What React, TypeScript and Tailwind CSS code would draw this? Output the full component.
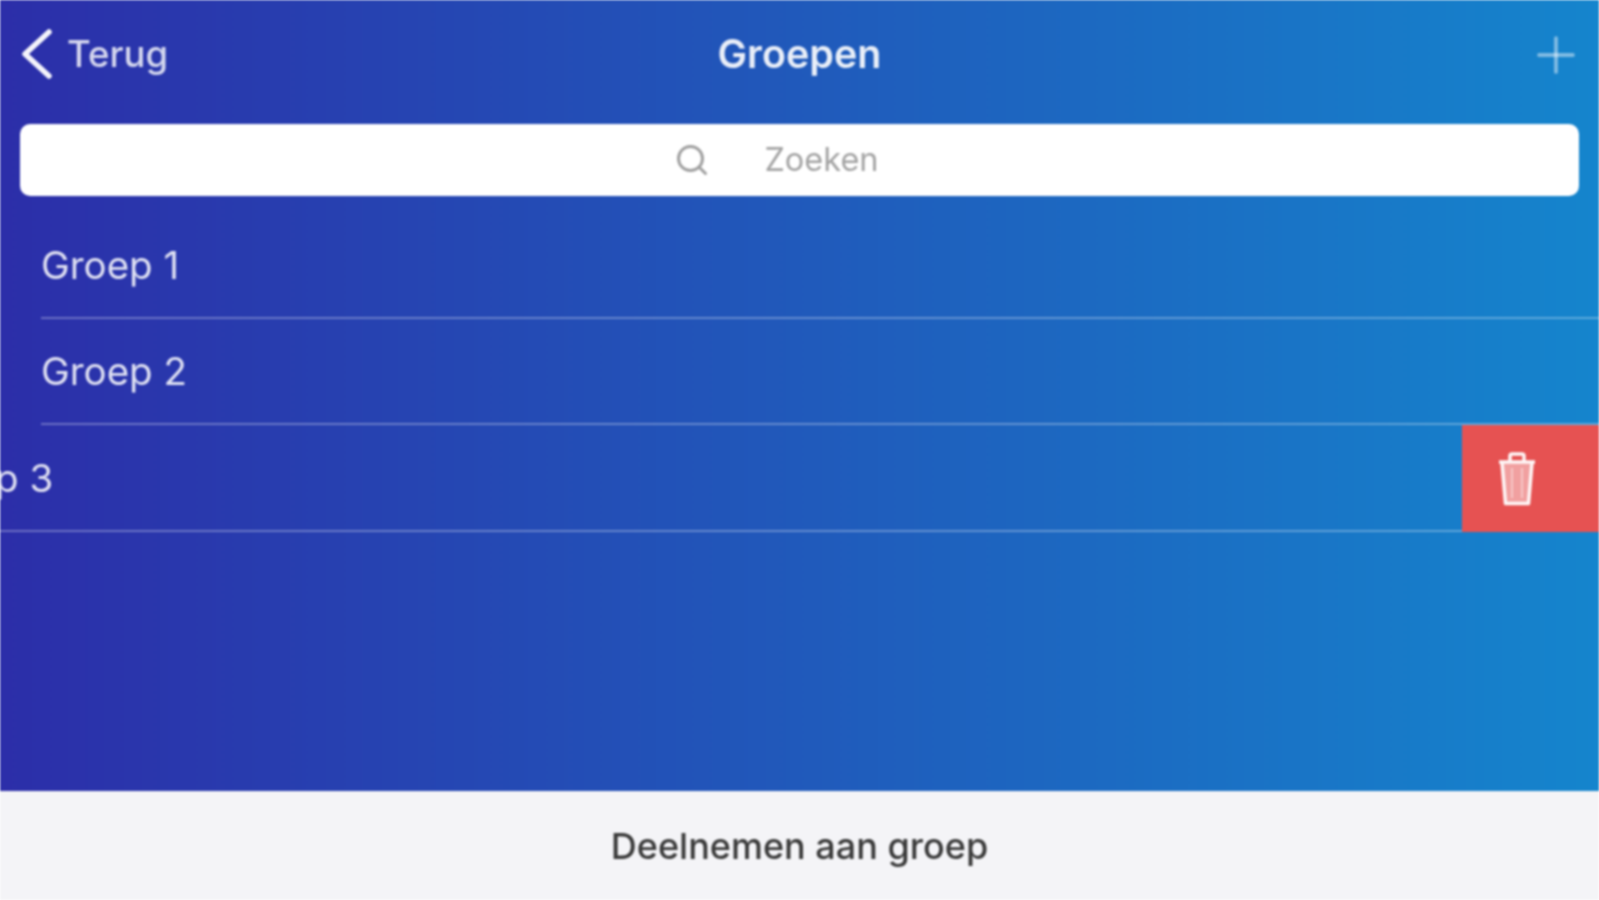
import { Plus, Search } from "lucide-react"

const font = "font-['Inter','Liberation_Sans',sans-serif]"

function GroupRow({ name }: { name: string }) {
  return (
    <div className="ml-[41px] flex h-[106px] items-center border-b-2 border-white/30 pt-[2px] text-[38.5px] text-white/85">
      {name}
    </div>
  )
}

function BackChevron() {
  return (
    <svg width="34" height="54" viewBox="0 0 34 54" fill="none" className="shrink-0 text-white/95">
      <path d="M29 4 L5 26 L29 48" stroke="currentColor" strokeWidth="5.5" strokeLinecap="round" strokeLinejoin="round" />
    </svg>
  )
}

function TrashCan() {
  return (
    <svg width="38" height="54" viewBox="0 0 38 54" fill="none" className="shrink-0 text-white">
      <path d="M5 11 L8.5 51 H29.5 L33 11 Z" fill="currentColor" fillOpacity="0.45" />
      <path d="M1 10 H37 M4 11 L7.5 51.5 H30.5 L34 11 M12 9 V4 Q12 2 14 2 H24 Q26 2 26 4 V9" stroke="currentColor" strokeWidth="3.5" strokeLinejoin="round" strokeOpacity="0.95" />
      <path d="M14 16 V46 M24 16 V46" stroke="currentColor" strokeWidth="2" strokeOpacity="0.4" />
    </svg>
  )
}

export default function App() {
  return (
    <div className={`flex h-[900px] w-[1599px] flex-col overflow-hidden blur-[1px] ${font}`}>
      <div className="flex h-[791px] flex-col bg-linear-to-r/srgb from-[#2c2ea9] to-[#1585cd]">
        <div className="flex h-[124px] shrink-0 items-center justify-between pb-[15px] pl-[20px] pr-[14px]">
          <div className="flex w-[294px] items-center gap-[13px] text-[36.5px] font-medium text-white/80">
            <BackChevron />
            <span>Terug</span>
          </div>
          <div className="text-[39.5px] font-semibold text-white/90">Groepen</div>
          <div className="flex w-[300px] justify-end">
            <Plus size={58} strokeWidth={1.6} className="text-white/45" />
          </div>
        </div>

        <div className="mx-[20px] flex h-[72px] shrink-0 items-center justify-center gap-[54px] rounded-[10px] bg-white pr-[46px] text-[32.5px] text-[#a3a3a3]">
          <Search size={36} strokeWidth={2} className="text-[#a0a0a0]" />
          <span>Zoeken</span>
        </div>

        <div className="mt-[17px] flex flex-col">
          <GroupRow name="Groep 1" />
          <GroupRow name="Groep 2" />
          <div className="flex h-[107px] items-stretch">
            <div className="flex min-w-0 flex-1 items-center overflow-hidden border-b-2 border-white/30 pt-[2px]">
              <span className="-ml-[93px] whitespace-nowrap text-[38.5px] text-white/85">Groep 3</span>
            </div>
            <div className="flex w-[137px] shrink-0 items-center bg-[#e65252] pl-[36px]">
              <TrashCan />
            </div>
          </div>
        </div>
      </div>
      <div className="flex flex-1 items-center justify-center bg-[#f4f4f7] text-[36px] font-medium text-[#3a3a3a]">
        Deelnemen aan groep
      </div>
    </div>
  )
}
